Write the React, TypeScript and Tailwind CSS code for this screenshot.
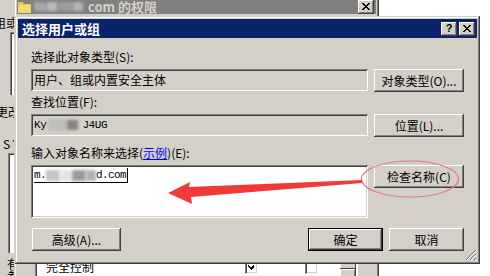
import React from "react";

function CaptionX({ size = 8 }: { size?: number }) {
  return (
    <svg width={size} height={size - 1} viewBox="0 0 8 7" shapeRendering="crispEdges">
      <path d="M0 0h2v1h-2zM6 0h2v1h-2zM1 1h2v1h-2zM5 1h2v1h-2zM2 2h4v1h-4zM3 3h2v1h-2zM2 4h4v1h-4zM1 5h2v1h-2zM5 5h2v1h-2zM0 6h2v1h-2zM6 6h2v1h-2z" fill="#000" />
    </svg>
  );
}

function Check({ checked }: { checked: boolean }) {
  return (
    <div className="w-[13px] h-[13px] bg-white shadow-[inset_1px_1px_#808080,inset_-1px_-1px_#ffffff,inset_2px_2px_#404040,inset_-2px_-2px_#d4d0c8] flex items-center justify-center">
      {checked && (
        <svg width="7" height="7" viewBox="0 0 7 7" shapeRendering="crispEdges">
          <path d="M6 0v3L3 6 0 3V1l3 3z" fill="#000" />
        </svg>
      )}
    </div>
  );
}

export default function App() {
  return (
    <div className="relative w-[490px] h-[276px] overflow-hidden bg-white font-['Noto_Sans_CJK_SC',sans-serif] text-[12px] text-black">
      {/* far back properties window */}
      <div className="absolute left-[-40px] top-[-10px] w-[418px] h-[300px] bg-[#d4d0c8] flex flex-col pl-[48px]">
        <div className="mt-[27px] h-[12px] leading-[12px] ml-[-14px] whitespace-nowrap">组或用户名称(G):</div>
        <div className="mt-[3px] h-[63px] w-[200px] ml-[2px] bg-white shadow-[inset_1px_1px_#808080,inset_2px_2px_#404040]" />
        <div className="mt-[11px] h-[12px] leading-[12px] ml-[-12px] whitespace-nowrap">更改</div>
        <div className="mt-[20px] h-[12px] leading-[12px] ml-[-5px] whitespace-nowrap">S YSTEM 的权限(P)</div>
        <div className="mt-[3px] h-[100px] w-[200px] bg-white shadow-[inset_1px_1px_#808080,inset_2px_2px_#404040]" />
        <div className="mt-[5px] h-[12px] leading-[12px] ml-[-1px] whitespace-nowrap">有关特别权限</div>
        <div className="h-[12px] leading-[12px] ml-[-1px] whitespace-nowrap">参阅</div>
      </div>

      {/* permissions window (inactive) */}
      <div className="absolute left-[14px] top-[-4px] w-[365px] h-[300px] bg-[#d4d0c8] p-[3px] flex flex-col shadow-[inset_-1px_-1px_#404040,inset_1px_1px_#d4d0c8,inset_-2px_-2px_#808080,inset_2px_2px_#ffffff]">
        <div className="h-[17px] bg-[#808080] flex items-center pl-[1px] pr-[2px]">
          <svg width="13" height="13" viewBox="0 0 13 13">
            <path d="M0 2h5l1 2h7v9H0z" fill="#e8c84a" />
            <path d="M0 5h13v8H0z" fill="#f4dc6c" />
          </svg>
          <div className="ml-[3px] flex items-center gap-[1px] blur-[1.5px]">
            <div className="w-[12px] h-[9px] bg-[#a8a8a8]" />
            <div className="w-[10px] h-[9px] bg-[#bcbcbc]" />
            <div className="w-[14px] h-[9px] bg-[#9c9c9c]" />
            <div className="w-[10px] h-[9px] bg-[#b4b4b4]" />
          </div>
          <span className="ml-[5px] font-bold text-[13px] leading-[15px] text-[#d4d0c8]">com 的权限</span>
          <div className="flex-1" />
          <div className="w-[16px] h-[14px] bg-[#d4d0c8] flex items-center justify-center shadow-[inset_-1px_-1px_#404040,inset_1px_1px_#ffffff,inset_-2px_-2px_#808080,inset_2px_2px_#d4d0c8]">
            <CaptionX />
          </div>
        </div>
        <div className="mt-[243px] ml-[18px] w-[323px] h-[60px] bg-white flex shadow-[inset_1px_1px_#808080,inset_2px_2px_#404040,inset_-1px_0_#ffffff]">
          <div className="flex-1 flex flex-col pt-[2px]">
            <div className="h-[16px] flex items-center">
              <span className="ml-[11px] w-[200px]">完全控制</span>
              <div className="ml-[-1px]"><Check checked /></div>
              <div className="ml-[47px]"><Check checked={false} /></div>
            </div>
            <div className="h-[16px] flex items-center">
              <span className="ml-[11px] w-[200px]">更改</span>
              <div className="ml-[-1px]"><Check checked /></div>
              <div className="ml-[47px]"><Check checked={false} /></div>
            </div>
          </div>
          <div className="w-[16px] mr-[2px] mt-[2px] flex flex-col bg-[#e8e6e0]">
            <div className="h-[10px] bg-[#d4d0c8] shadow-[inset_-1px_-1px_#404040,inset_1px_1px_#ffffff]" />
            <div className="h-[30px] bg-[#d4d0c8] shadow-[inset_-1px_-1px_#404040,inset_1px_1px_#ffffff,inset_-2px_-2px_#808080]" />
          </div>
        </div>
      </div>

      {/* front dialog */}
      <div className="absolute left-[15px] top-[16px] w-[465px] h-[248px] bg-[#d4d0c8] p-[3px] flex flex-col shadow-[inset_-1px_-1px_#404040,inset_1px_1px_#d4d0c8,inset_-2px_-2px_#808080,inset_2px_2px_#ffffff]">
        <div className="h-[19px] bg-[#0a246a] flex items-center pl-[4px] pr-[2px]">
          <span className="text-white font-bold text-[13px] leading-[15px]">选择用户或组</span>
          <div className="flex-1" />
          <div className="w-[16px] h-[14px] bg-[#d4d0c8] flex items-center justify-center shadow-[inset_-1px_-1px_#404040,inset_1px_1px_#ffffff,inset_-2px_-2px_#808080,inset_2px_2px_#d4d0c8]">
            <span className="font-['Liberation_Sans',sans-serif] font-bold text-[11px] leading-[11px]">?</span>
          </div>
          <div className="ml-[2px] w-[16px] h-[14px] bg-[#d4d0c8] flex items-center justify-center shadow-[inset_-1px_-1px_#404040,inset_1px_1px_#ffffff,inset_-2px_-2px_#808080,inset_2px_2px_#d4d0c8]">
            <CaptionX />
          </div>
        </div>

        <div className="flex flex-col pl-[13px] pr-[13px]">
          <div className="mt-[13px] h-[12px] leading-[12px]">选择此对象类型(S):</div>
          <div className="mt-[6px] grid grid-cols-[1fr_90px] gap-x-[6px]">
            <div className="h-[22px] flex items-center pl-[3px] bg-[#d4d0c8] shadow-[inset_1px_1px_#808080,inset_-1px_-1px_#ffffff,inset_2px_2px_#404040,inset_-2px_-2px_#d4d0c8]">
              用户、组或内置安全主体
            </div>
            <div className="h-[23px] flex items-center justify-center shadow-[inset_-1px_-1px_#404040,inset_1px_1px_#ffffff,inset_-2px_-2px_#808080,inset_2px_2px_#d4d0c8]">
              对象类型(O)...
            </div>
          </div>

          <div className="mt-[4px] h-[12px] leading-[12px]">查找位置(F):</div>
          <div className="mt-[6px] grid grid-cols-[1fr_90px] gap-x-[6px]">
            <div className="h-[22px] flex items-center pl-[3px] bg-[#d4d0c8] shadow-[inset_1px_1px_#808080,inset_-1px_-1px_#ffffff,inset_2px_2px_#404040,inset_-2px_-2px_#d4d0c8] font-['Liberation_Mono',monospace] text-[11px] tracking-[-0.4px]">
              <span className="shrink-0">Ky</span>
              <div className="shrink-0 ml-[2px] w-[19px] h-[12px] bg-[#bebebe] blur-[1.5px]" />
              <div className="shrink-0 w-[11px] h-[10px] bg-[#858585] blur-[1.5px]" />
              <span className="shrink-0 ml-[4px]">J4UG</span>
            </div>
            <div className="h-[23px] flex items-center justify-center shadow-[inset_-1px_-1px_#404040,inset_1px_1px_#ffffff,inset_-2px_-2px_#808080,inset_2px_2px_#d4d0c8]">
              位置(L)...
            </div>
          </div>

          <div className="mt-[10px] h-[12px] leading-[12px]">
            输入对象名称来选择(<span className="text-[#0000ff] underline">示例</span>)(E):
          </div>
          <div className="mt-[6px] grid grid-cols-[1fr_90px] gap-x-[6px] items-start">
            <div className="h-[53px] bg-white pl-[3px] pt-[3px] shadow-[inset_1px_1px_#808080,inset_-1px_-1px_#ffffff,inset_2px_2px_#404040,inset_-2px_-2px_#d4d0c8]">
              <div className="flex items-center h-[15px] w-fit border-b border-black font-['Liberation_Mono',monospace] text-[11px] tracking-[-0.6px]">
                <span>m.</span>
                <div className="shrink-0 w-[14px] h-[11px] bg-[#c4c4c4] blur-[1.5px]" />
                <div className="shrink-0 w-[12px] h-[11px] bg-[#e4e4e4] blur-[1.5px]" />
                <div className="shrink-0 w-[14px] h-[11px] bg-[#9a9a9a] blur-[1.5px]" />
                <div className="shrink-0 w-[10px] h-[11px] bg-[#b0b0b0] blur-[1.5px]" />
                <span>d.com</span>
                <div className="ml-[1px] w-[1px] h-[15px] bg-black" />
              </div>
            </div>
            <div className="h-[23px] flex items-center justify-center shadow-[inset_-1px_-1px_#404040,inset_1px_1px_#ffffff,inset_-2px_-2px_#808080,inset_2px_2px_#d4d0c8]">
              检查名称(C)
            </div>
          </div>

          <div className="mt-[10px] flex items-center">
            <div className="ml-[1px] w-[89px] h-[23px] flex items-center justify-center shadow-[inset_-1px_-1px_#404040,inset_1px_1px_#ffffff,inset_-2px_-2px_#808080,inset_2px_2px_#d4d0c8]">
              高级(A)...
            </div>
            <div className="flex-1" />
            <div className="w-[75px] h-[23px] flex items-center justify-center border border-black shadow-[inset_-1px_-1px_#404040,inset_1px_1px_#ffffff,inset_-2px_-2px_#808080,inset_2px_2px_#d4d0c8]">
              确定
            </div>
            <div className="ml-[6px] w-[75px] h-[23px] flex items-center justify-center shadow-[inset_-1px_-1px_#404040,inset_1px_1px_#ffffff,inset_-2px_-2px_#808080,inset_2px_2px_#d4d0c8]">
              取消
            </div>
          </div>
        </div>

        <svg className="absolute right-[3px] bottom-[3px]" width="12" height="12" viewBox="0 0 12 12">
          <path d="M11 1L1 11M11 5L5 11M11 9L9 11" stroke="#808080" strokeWidth="1.2" />
          <path d="M11 2L2 11M11 6L6 11M11 10L10 11" stroke="#ffffff" strokeWidth="1" />
        </svg>
      </div>

      {/* annotation overlay */}
      <svg className="absolute left-0 top-0 pointer-events-none" width="490" height="276" viewBox="0 0 490 276">
        <ellipse cx="410" cy="179" rx="48.5" ry="18" fill="none" stroke="#e07c86" strokeWidth="1.2" />
        <polygon points="168,193 190,182 189,187 362,180 362,183 191,197 192,204" fill="#f03a3a" />
      </svg>
    </div>
  );
}
